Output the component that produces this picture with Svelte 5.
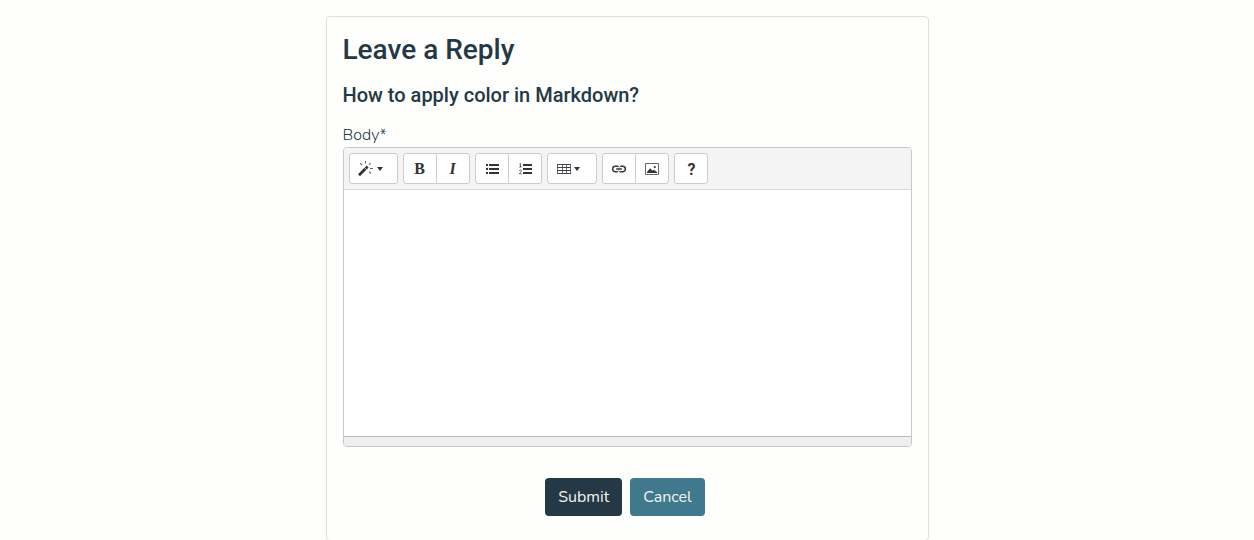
<script lang="ts">
  let body = $state('');
</script>

<main>
  <form class="card" onsubmit={(e) => e.preventDefault()}>
    <h1>Leave a Reply</h1>
    <h2>How to apply color in Markdown?</h2>
    <label for="body">Body*</label>
    <div class="editor">
      <div class="toolbar">
        <div class="group">
          <button type="button" class="tool menu" aria-label="Style">
            <svg width="17" height="16" viewBox="0 0 17 16" fill="none">
              <path d="M1 14.2 7.4 7.8" stroke="#333" stroke-width="2.8" />
              <path d="M7.8 7.4 9.6 5.6" stroke="#333" stroke-width="2.8" />
              <path d="M2.2 2.2 4 4M7.5 0v2.4M12.6 2.2l-1.6 1.6M12 7.5h3M11 10.6l1.9 1.9" stroke="#666" stroke-width="1.1" />
            </svg>
            <svg width="6" height="4" viewBox="0 0 6 4"><path d="M0 0h6L3 4z" fill="#333" /></svg>
          </button>
        </div>
        <div class="group">
          <button type="button" class="tool bold">B</button>
          <button type="button" class="tool italic">I</button>
        </div>
        <div class="group">
          <button type="button" class="tool" aria-label="Unordered list">
            <svg width="14" height="12" viewBox="0 0 14 12" fill="#333">
              <path d="M0 1h2v2H0zM0 5h2v2H0zM0 9h2v2H0zM3 1h10v2H3zM3 5h10v2H3zM3 9h10v2H3z" />
            </svg>
          </button>
          <button type="button" class="tool" aria-label="Ordered list">
            <svg width="14" height="12" viewBox="0 0 14 12" fill="#333">
              <path d="M4 1h9v2H4zM4 5h9v2H4zM4 9h9v2H4z" />
              <path d="M.3 1.2 1.5.5V4M.2 4h2.5M.4 7.8C.6 6.6 2.6 6.8 2.4 8c-.1 1-1.8 1.9-2 2.8h2.4" fill="none" stroke="#444" stroke-width=".8" />
            </svg>
          </button>
        </div>
        <div class="group">
          <button type="button" class="tool menu table" aria-label="Table">
            <svg width="15" height="12" viewBox="0 0 15 12" fill="none" stroke-width="1">
              <path d="M5.5 1v10M9.5 1v10" stroke="#666690" />
              <path d="M.5 1v10M13.5 1v10" stroke="#666690" />
              <path d="M0 1.5h14M0 4.5h14M0 7.5h14M0 10.5h14" stroke="#444" />
            </svg>
            <svg width="6" height="4" viewBox="0 0 6 4"><path d="M0 0h6L3 4z" fill="#333" /></svg>
          </button>
        </div>
        <div class="group">
          <button type="button" class="tool" aria-label="Link">
            <svg width="15" height="8" viewBox="0 0 15 8" fill="none" stroke="#333" stroke-width="1.5">
              <path d="M5.8 1.2H3.4a2.8 2.8 0 0 0 0 5.6h2.4M8.2 1.2h2.4a2.8 2.8 0 0 1 0 5.6H8.2M4.2 4h5.6" />
              <path d="M5.6 1.2c1 0 1.5.5 1.7 1.2M8.4 6.8c-1 0-1.5-.5-1.7-1.2" stroke-width="1" />
            </svg>
          </button>
          <button type="button" class="tool" aria-label="Picture">
            <svg width="15" height="12" viewBox="0 0 15 12" fill="#333">
              <path d="M.5.5h13v11H.5z" fill="none" stroke="#666" />
              <path d="M2 10V8.9l3.2-3.7 2.2 2.6 1.4-1L12 8.9V10z" />
              <circle cx="9.8" cy="4" r="1.1" />
            </svg>
          </button>
        </div>
        <div class="group">
          <button type="button" class="tool help" aria-label="Help">?</button>
        </div>
      </div>
      <textarea id="body" bind:value={body}></textarea>
      <div class="status"></div>
    </div>
    <div class="actions">
      <button class="action submit">Submit</button>
      <button type="button" class="action cancel">Cancel</button>
    </div>
  </form>
</main>

<style>
  :global(body) {
    margin: 0;
    background: #fefefd;
    color: #243845;
    font: 16px/24px Nunito, Lato, sans-serif;
  }
  main {
    padding: 16px;
  }
  .card {
    box-sizing: border-box;
    max-width: 603px;
    margin: 0 auto;
    padding: 16px 16px 24px;
    border: 1px solid #dfdfdf;
    border-radius: 4px;
  }
  h1,
  h2 {
    margin: 0;
    font-family: Roboto, sans-serif;
    font-weight: 500;
  }
  h1 {
    margin-bottom: 16px;
    font-size: 28px;
    line-height: 34px;
  }
  h2 {
    margin-bottom: 16px;
    font-size: 20px;
    line-height: 24px;
  }
  label {
    display: block;
    font-weight: 300;
  }
  .editor {
    border: 1px solid #c8c8ca;
    border-radius: 4px;
    overflow: hidden;
    background: #fff;
  }
  .toolbar {
    display: flex;
    flex-wrap: wrap;
    gap: 5px;
    padding: 5px;
    border-bottom: 1px solid #d9d9d9;
    background: #f4f4f4;
  }
  .group {
    display: flex;
  }
  .tool {
    box-sizing: border-box;
    display: flex;
    align-items: center;
    justify-content: center;
    width: 34px;
    height: 31px;
    padding: 0 0 0 2px;
    border: 1px solid #ccc;
    background: #fff;
    color: #333;
    font: bold 16px/20px "Liberation Serif", serif;
  }
  .tool:first-child {
    border-radius: 3px 0 0 3px;
  }
  .tool:last-child {
    border-radius: 0 3px 3px 0;
  }
  .tool:only-child {
    border-radius: 3px;
  }
  .tool + .tool {
    margin-left: -1px;
  }
  .menu {
    gap: 2px;
    width: 49px;
    padding: 0 6px 0 0;
  }
  .table {
    width: 50px;
  }
  .bold,
  .italic {
    padding-left: 0;
  }
  .italic {
    font-style: italic;
  }
  .help {
    padding-top: 2px;
    font: bold 16px/20px Roboto, sans-serif;
  }
  textarea {
    box-sizing: border-box;
    display: block;
    width: 100%;
    height: 246px;
    padding: 8px;
    border: 0;
    outline: 0;
    resize: none;
    background: #fff;
    color: inherit;
    font: inherit;
  }
  .status {
    height: 9px;
    border-top: 1px solid #bbb;
    background: #efefef;
  }
  .actions {
    display: flex;
    justify-content: center;
    gap: 8px;
    padding: 31px 4px 0 0;
  }
  .action {
    padding: 7px 13px;
    border: 0;
    border-radius: 4px;
    color: #f4f4f1;
    font: inherit;
  }
  .submit {
    background: #243845;
  }
  .cancel {
    background: #40788e;
  }
</style>
